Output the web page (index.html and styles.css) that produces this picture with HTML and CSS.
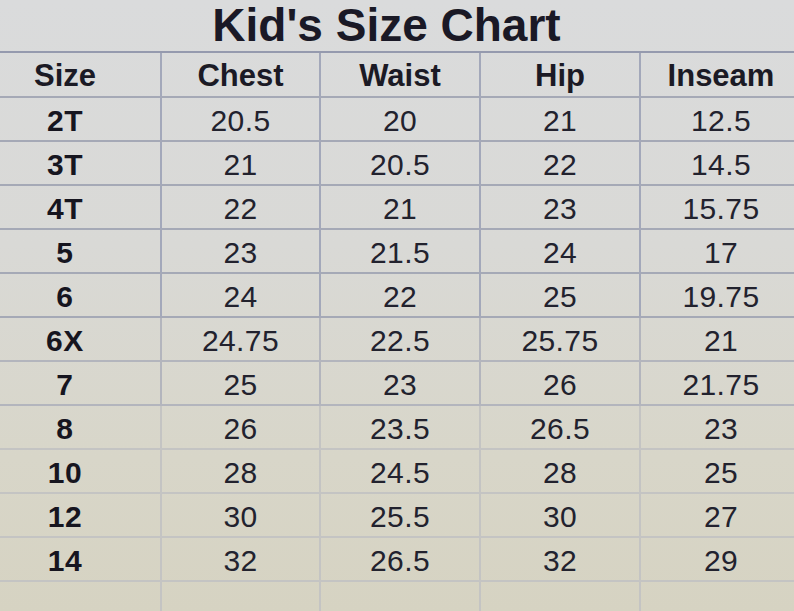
FILE: index.html
```html
<!DOCTYPE html>
<html lang="en">
<head>
<meta charset="utf-8">
<title>Kid's Size Chart</title>
<link rel="stylesheet" href="styles.css">
</head>
<body>
<main class="sheet">
  <h1 class="title">Kid's Size Chart</h1>
  <div class="grid">
    <div class="cell head first">Size</div>
    <div class="cell head">Chest</div>
    <div class="cell head">Waist</div>
    <div class="cell head">Hip</div>
    <div class="cell head">Inseam</div>

    <div class="cell size first">2T</div><div class="cell">20.5</div><div class="cell">20</div><div class="cell">21</div><div class="cell">12.5</div>
    <div class="cell size first">3T</div><div class="cell">21</div><div class="cell">20.5</div><div class="cell">22</div><div class="cell">14.5</div>
    <div class="cell size first">4T</div><div class="cell">22</div><div class="cell">21</div><div class="cell">23</div><div class="cell">15.75</div>
    <div class="cell size first">5</div><div class="cell">23</div><div class="cell">21.5</div><div class="cell">24</div><div class="cell">17</div>
    <div class="cell size first">6</div><div class="cell">24</div><div class="cell">22</div><div class="cell">25</div><div class="cell">19.75</div>
    <div class="cell size first">6X</div><div class="cell">24.75</div><div class="cell">22.5</div><div class="cell">25.75</div><div class="cell">21</div>
    <div class="cell size first">7</div><div class="cell">25</div><div class="cell">23</div><div class="cell">26</div><div class="cell">21.75</div>
    <div class="cell size first">8</div><div class="cell">26</div><div class="cell">23.5</div><div class="cell">26.5</div><div class="cell">23</div>
    <div class="cell size first">10</div><div class="cell">28</div><div class="cell">24.5</div><div class="cell">28</div><div class="cell">25</div>
    <div class="cell size first">12</div><div class="cell">30</div><div class="cell">25.5</div><div class="cell">30</div><div class="cell">27</div>
    <div class="cell size first">14</div><div class="cell">32</div><div class="cell">26.5</div><div class="cell">32</div><div class="cell">29</div>
    <div class="cell first"></div><div class="cell"></div><div class="cell"></div><div class="cell"></div><div class="cell"></div>
  </div>
</main>
</body>
</html>
```

FILE: styles.css
```css
html, body {
  margin: 0;
  padding: 0;
}

body {
  width: 794px;
  height: 611px;
  overflow: hidden;
  background: linear-gradient(180deg, #dadbdc 0%, #d9d9d6 40%, #d8d6c9 75%, #d6d3c2 100%);
  font-family: "Liberation Sans", Arial, sans-serif;
  color: #1d1c28;
}

.sheet {
  width: 803px;
}

.title {
  margin: 0;
  height: 53px;
  box-sizing: border-box;
  border-bottom: 2px solid #959aae;
  font-size: 46px;
  font-weight: bold;
  line-height: 50px;
  text-align: center;
  padding-right: 30px;
  color: #1a1926;
}

.grid {
  display: grid;
  grid-template-columns: 162px 159px 160px 160px 162px;
  grid-template-rows: 45px;
  grid-auto-rows: 44px;
}

.cell {
  box-sizing: border-box;
  border-right: 2px solid #a3a8ba;
  border-bottom: 2px solid #a5a9b6;
  display: flex;
  align-items: center;
  justify-content: center;
  padding-top: 3px;
  font-size: 30px;
  letter-spacing: 0.4px;
  color: #22222e;
}

/* the photographed grid lines fade towards the bottom */
.cell:nth-child(n+31) {
  border-color: #b3b5bd;
}

.cell:nth-child(n+41) {
  border-color: #c4c4c3;
}

.cell.first {
  padding-right: 30px;
}

.head {
  font-size: 31px;
  font-weight: bold;
  letter-spacing: 0;
  color: #1b1a25;
}

.size {
  font-weight: bold;
  letter-spacing: 0.6px;
  color: #16151f;
}
```
